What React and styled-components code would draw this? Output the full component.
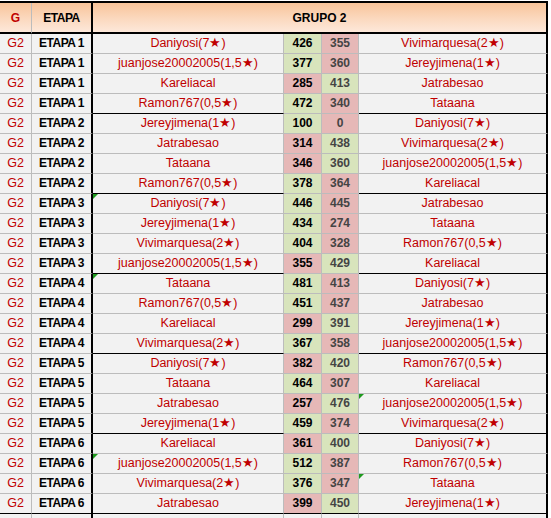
import styled, { createGlobalStyle, css } from 'styled-components';

const GlobalStyle = createGlobalStyle`
  html, body {
    margin: 0;
    padding: 0;
    background: #ffffff;
  }
  body {
    font-family: 'Liberation Sans', Arial, sans-serif;
  }
`;

const LINE = '#bcbcbc';

const rows = [
  [1, 'Daniyosi(7★)', 426, 355, 'Vivimarquesa(2★)'],
  [1, 'juanjose20002005(1,5★)', 377, 360, 'Jereyjimena(1★)'],
  [1, 'Kareliacal', 285, 413, 'Jatrabesao'],
  [1, 'Ramon767(0,5★)', 472, 340, 'Tataana'],
  [2, 'Jereyjimena(1★)', 100, 0, 'Daniyosi(7★)'],
  [2, 'Jatrabesao', 314, 438, 'Vivimarquesa(2★)'],
  [2, 'Tataana', 346, 360, 'juanjose20002005(1,5★)'],
  [2, 'Ramon767(0,5★)', 378, 364, 'Kareliacal'],
  [3, 'Daniyosi(7★)', 446, 445, 'Jatrabesao', 'left'],
  [3, 'Jereyjimena(1★)', 434, 274, 'Tataana'],
  [3, 'Vivimarquesa(2★)', 404, 328, 'Ramon767(0,5★)'],
  [3, 'juanjose20002005(1,5★)', 355, 429, 'Kareliacal'],
  [4, 'Tataana', 481, 413, 'Daniyosi(7★)', 'left'],
  [4, 'Ramon767(0,5★)', 451, 437, 'Jatrabesao'],
  [4, 'Kareliacal', 299, 391, 'Jereyjimena(1★)'],
  [4, 'Vivimarquesa(2★)', 367, 358, 'juanjose20002005(1,5★)'],
  [5, 'Daniyosi(7★)', 382, 420, 'Ramon767(0,5★)'],
  [5, 'Tataana', 464, 307, 'Kareliacal'],
  [5, 'Jatrabesao', 257, 476, 'juanjose20002005(1,5★)', 'right'],
  [5, 'Jereyjimena(1★)', 459, 374, 'Vivimarquesa(2★)'],
  [6, 'Kareliacal', 361, 400, 'Daniyosi(7★)'],
  [6, 'juanjose20002005(1,5★)', 512, 387, 'Ramon767(0,5★)', 'left'],
  [6, 'Vivimarquesa(2★)', 376, 347, 'Tataana', 'right'],
  [6, 'Jatrabesao', 399, 450, 'Jereyjimena(1★)'],
];

const Sheet = styled.div`
  margin-top: 1px;
  width: 548px;
  display: grid;
  grid-template-columns: 32px 61px 191px 38px 37px 189px;
  grid-template-rows: 31px;
  grid-auto-rows: 20px;
  border-top: 2px solid #000;
  background: #f2f2f2;
`;

const HeadCell = styled.div`
  box-sizing: border-box;
  height: 31px;
  display: flex;
  align-items: center;
  justify-content: center;
  font-size: 12px;
  font-weight: bold;
  letter-spacing: ${p => (p.$tight ? '-0.5px' : '0')};
  color: ${p => (p.$red ? '#c00000' : '#000')};
  background: linear-gradient(to bottom, #f8c49a 0%, #fbd9bf 55%, #fde8da 100%);
  border-bottom: 2px solid #000;
  border-right: ${p => p.$edge ? '2px solid #000' : `1px solid ${LINE}`};
  grid-column: ${p => p.$span || 'auto'};
`;

const Cell = styled.div`
  position: relative;
  box-sizing: border-box;
  height: 20px;
  line-height: 19px;
  text-align: center;
  white-space: nowrap;
  overflow: hidden;
  font-size: 12.5px;
  color: #c00000;
  background: #f2f2f2;
  border-right: ${p => p.$edge ? '2px solid #000' : `1px solid ${LINE}`};
  border-bottom: 1px solid ${p => (p.$dark ? '#000' : LINE)};
  ${p => p.$flag && css`
    &::before {
      content: '';
      position: absolute;
      left: 0;
      top: 0;
      border-top: 5px solid #1f9a1f;
      border-right: 5px solid transparent;
    }
  `}
`;

const StageCell = styled(Cell)`
  font-size: 12px;
  font-weight: bold;
  letter-spacing: -0.5px;
  color: #000;
`;

const ScoreCell = styled(Cell)`
  font-size: 12px;
  font-weight: bold;
  color: ${p => (p.$second ? '#444' : '#000')};
  background: ${p => (p.$win ? '#d8e4bc' : '#e6b8b7')};
`;

const App = () => (
  <>
    <GlobalStyle />
    <Sheet>
      <HeadCell $red>G</HeadCell>
      <HeadCell $tight $edge>ETAPA</HeadCell>
      <HeadCell $span="span 4" $edge>GRUPO 2</HeadCell>
      {rows.map(([stage, home, a, b, away, flag], i) => {
        const next = rows[i + 1];
        const groupEnd = !next || next[0] !== stage;
        const lastRow = !next;
        return [
          <Cell key={`g${i}`} $dark={lastRow}>G2</Cell>,
          <StageCell key={`e${i}`} $edge $dark={lastRow}>{`ETAPA ${stage}`}</StageCell>,
          <Cell key={`h${i}`} $dark={groupEnd} $flag={flag === 'left'}>{home}</Cell>,
          <ScoreCell key={`a${i}`} $win={a > b} $dark={lastRow}>{a}</ScoreCell>,
          <ScoreCell key={`b${i}`} $second $win={b > a} $dark={lastRow}>{b}</ScoreCell>,
          <Cell key={`w${i}`} $edge $dark={groupEnd} $flag={flag === 'right'}>{away}</Cell>,
        ];
      })}
      <Cell />
      <StageCell $edge />
      <Cell />
      <Cell />
      <Cell />
      <Cell $edge />
    </Sheet>
  </>
);

export default App;
